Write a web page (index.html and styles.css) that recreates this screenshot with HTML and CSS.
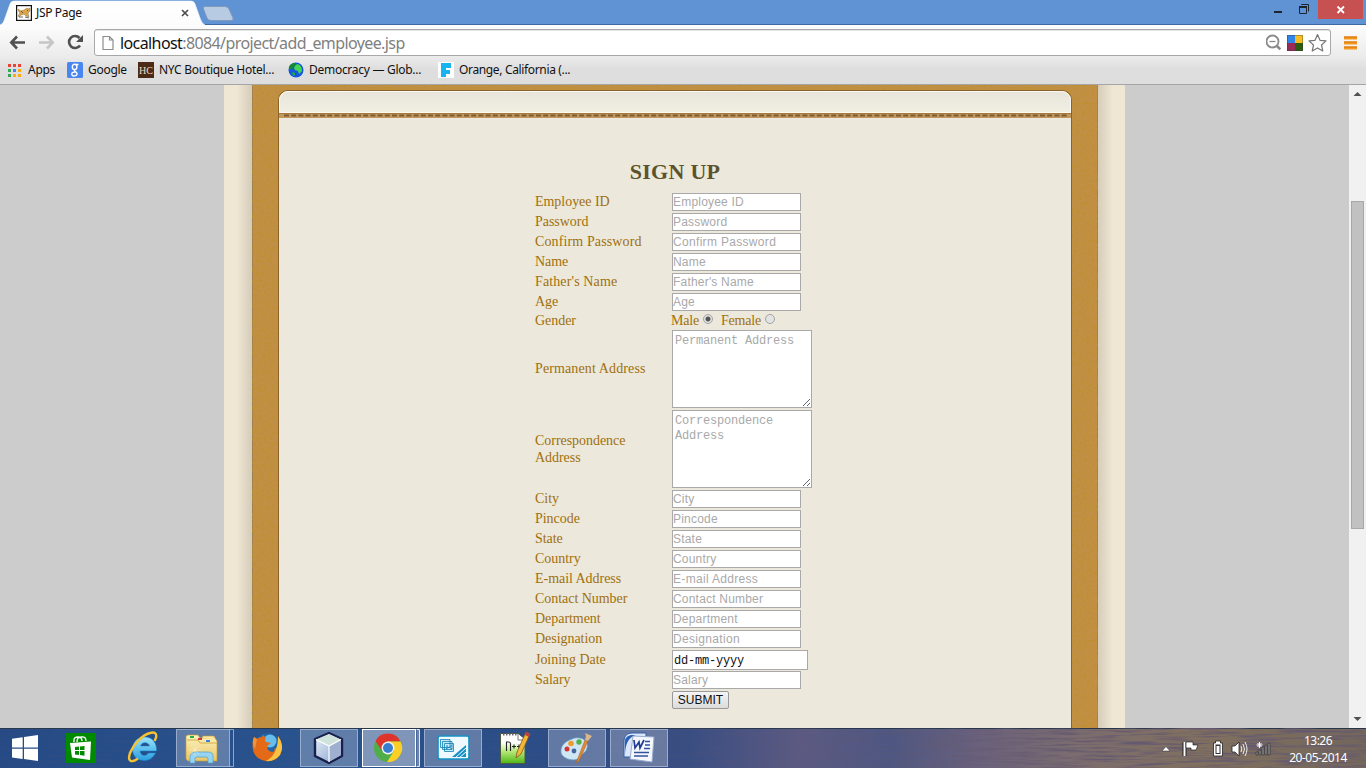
FILE: index.html
```html
<!DOCTYPE html>
<html lang="en">
<head>
<meta charset="utf-8">
<title>JSP Page</title>
<link rel="stylesheet" href="styles.css">
</head>
<body>
<header class="tabstrip">
  <svg class="tabs" width="240" height="25" viewBox="0 0 240 25">
    <defs><linearGradient id="tabg" x1="0" y1="0" x2="0" y2="1"><stop offset="0" stop-color="#fff"/><stop offset="1" stop-color="#fcfcfc"/></linearGradient></defs>
    <path d="M0 25C3 24 4 21 5 18L10 4Q11 1 14 1H191Q194 1 195 4L200 18Q202 24 205 25Z" fill="url(#tabg)" stroke="#f5f8fc" stroke-width=".6"/>
    <path d="M205 6.500H225Q228 6.500 229 9L233 18Q234 20.500 231 20.500H211Q208 20.500 207 18L203.500 9Q202.500 6.500 205 6.500Z" fill="#b7cbe3" stroke="#8099bd"/>
  </svg>
  <div class="tab">
    <svg width="16" height="16" viewBox="0 0 16 16"><rect x=".6" y=".6" width="14.800" height="14.800" fill="#fff" stroke="#111" stroke-width="1.200"/><path d="M2 4L5 6L8 5L11 3L12 4L14 3V6L12 8L13 12L10 11L8 9L5 10L3 12L2 11L4 8L3 7Z" fill="#dca547" stroke="#8c703e" stroke-width=".5"/><path d="M5 6L7 8M11 5L12 6M3 12H7M9 12L13 13" stroke="#444" stroke-width=".8"/></svg>
    <span class="tab-title">JSP Page</span>
    <svg class="tab-x" width="8" height="8" viewBox="0 0 8 8"><path d="M1 1L7 7M7 1L1 7" stroke="#4c4c4c" stroke-width="1.700"/></svg>
  </div>
  <div class="win">
    <svg width="110" height="19" viewBox="0 0 110 19">
      <path d="M0 12H8" stroke="#1c2530" stroke-width="2"/>
      <path d="M25.500 7.500H32.500V13.500H25.500ZM27.500 5V4.500H34.500V11.500" fill="none" stroke="#1c2530"/><path d="M25 7H33" stroke="#1c2530" stroke-width="2"/>
      <rect x="44" y="0" width="45" height="19" fill="#c75050"/><path d="M63.500 6.500L70 13M70 6.500L63.500 13" stroke="#fff" stroke-width="1.800"/>
    </svg>
  </div>
</header>
<div class="toolbar">
  <svg class="nav" width="94" height="34" viewBox="0 0 94 34">
    <g fill="none" stroke-width="2.600"><path d="M11 17.500H25M17 11.500L11.300 17.500L17 23.500" stroke="#505050"/><path d="M39 17.500H53M47 11.500L52.700 17.500L47 23.500" stroke="#c6c6c6"/><path d="M80 20.500A6 6 0 1 1 79.500 13" stroke="#505050"/></g><path d="M83 10V17H76Z" fill="#505050"/>
  </svg>
  <div class="omnibox">
    <svg width="12" height="16" viewBox="0 0 12 16"><path d="M1 1.500H7.500L11 5V14.500H1Z M7.500 1.500V5H11" fill="#fff" stroke="#8d8d8d" stroke-width="1.200"/></svg>
    <span class="url"><b>localhost</b>:8084/project/add_employee.jsp</span>
    <svg class="omni-icons" width="62" height="22" viewBox="0 0 62 22">
      <g fill="none" stroke="#8b8b8b"><circle cx="6.500" cy="9.500" r="6" stroke-width="1.800"/><path d="M3.500 9.500H9.500" stroke-width="1.300"/><path d="M11 14L14.300 17.300" stroke-width="2.600"/></g>
      <rect x="21" y="3" width="8" height="8" fill="#2f86e8"/><rect x="29" y="3" width="8" height="8" fill="#f8bd20"/><rect x="21" y="11" width="8" height="8" fill="#9a2b57"/><rect x="29" y="11" width="8" height="8" fill="#2d5e10"/><rect x="21.500" y="3.500" width="15" height="15" fill="none" stroke="#333" stroke-opacity=".35"/>
      <path d="M51.500 2.500L54 8.300L60 8.900L55.500 13L56.800 19L51.500 15.900L46.200 19L47.500 13L43 8.900L49 8.300Z" fill="#fff" stroke="#777" stroke-width="1.200" stroke-linejoin="round"/>
    </svg>
  </div>
  <svg class="menu" width="13" height="14" viewBox="0 0 13 14"><path d="M0 2H13M0 7H13M0 12H13" stroke="#f49a1c" stroke-width="3"/><path d="M0 1H13M0 6H13M0 11H13" stroke="#d96f0c" stroke-width="1"/></svg>
</div>
<nav class="bookmarks">
  <a class="bm bm-apps"><svg width="13" height="13" viewBox="0 0 13 13"><g fill="#ea4335"><rect width="3" height="3"/><rect x="5" width="3" height="3"/><rect x="10" width="3" height="3"/></g><rect y="5" width="3" height="3" fill="#34a853"/><rect x="5" y="5" width="3" height="3" fill="#4285f4"/><rect x="10" y="5" width="3" height="3" fill="#fbab10"/><rect y="10" width="3" height="3" fill="#34a853"/><rect x="5" y="10" width="3" height="3" fill="#fbab10"/><rect x="10" y="10" width="3" height="3" fill="#fbab10"/></svg><span>Apps</span></a>
  <a class="bm bm-google"><svg width="16" height="16" viewBox="0 0 16 16"><rect width="16" height="16" rx="1.500" fill="#4a86f0"/><g fill="none" stroke="#fff" stroke-width="1.400"><ellipse cx="7.600" cy="4.900" rx="2.300" ry="2.600"/><path d="M9 2.500H11.500M8 7.500C6 9 9.500 9.300 10 11.500C10.500 14.500 4.800 14.800 4.700 12C4.700 10.500 6.500 9.900 8.300 10"/></g></svg><span>Google</span></a>
  <a class="bm bm-nyc"><svg width="16" height="16" viewBox="0 0 16 16"><rect width="16" height="16" fill="#4b2a16"/><text x="1" y="12" class="hc">HC</text></svg><span>NYC Boutique Hotel...</span></a>
  <a class="bm bm-demo"><svg width="16" height="16" viewBox="0 0 16 16"><circle cx="8" cy="8" r="7.500" fill="#1557e0"/><path d="M2 3Q4 1 7 1L8 3L6 5L4 6L5 8L2 7L1 8Q0 5 2 3Z" fill="#168a32"/><path d="M7 4L9 2Q14 3 14 9L11 12L10 9L7 8L6 6Z" fill="#44d84a"/><path d="M4 10L7 11L7 13L5 14Z" fill="#1eb040"/></svg><span>Democracy — Glob...</span></a>
  <a class="bm bm-orange"><svg width="16" height="16" viewBox="0 0 16 16"><rect width="16" height="16" fill="#fff"/><path d="M3 1H13V6H8V8H12V12H8V15H3Z" fill="#16b5f0"/></svg><span>Orange, California (...</span></a>
</nav>
<main class="view">
  <div class="page">
    <div class="paper">
      <div class="wood">
        <svg class="grain" width="846" height="643"><filter id="leather" x="0" y="0" width="100%" height="100%"><feTurbulence type="fractalNoise" baseFrequency=".4" numOctaves="2" seed="4"/><feColorMatrix values="0 0 0 0 .5  0 0 0 0 .28  0 0 0 0 .03  2.600 0 0 0 -1.050"/></filter><rect width="846" height="643" filter="url(#leather)"/></svg>
        <div class="sheet">
          <div class="cap"></div>
          <div class="stitch"><svg width="792" height="4"><path d="M5 1.500H788" stroke="#7c5c30" stroke-width="2" stroke-dasharray="5 2.200"/></svg></div>
          <form class="signup">
            <h1>SIGN UP</h1>
            <div class="fields">
              <label>Employee ID</label><input placeholder="Employee ID">
              <label>Password</label><input placeholder="Password">
              <label class="wide">Confirm Password</label><input class="wide" placeholder="Confirm Password">
              <label>Name</label><input placeholder="Name">
              <label class="wide">Father's Name</label><input placeholder="Father's Name">
              <label>Age</label><input placeholder="Age">
              <label class="low">Gender</label><div class="gender"><span>Male</span><i class="radio on"></i><span class="female">Female</span><i class="radio"></i></div>
              <label class="wide">Permanent Address</label><textarea placeholder="Permanent Address"></textarea>
              <label class="two low">Correspondence Address</label><textarea placeholder="Correspondence Address"></textarea>
              <label>City</label><input placeholder="City">
              <label>Pincode</label><input placeholder="Pincode">
              <label>State</label><input placeholder="State">
              <label>Country</label><input placeholder="Country">
              <label>E-mail Address</label><input class="wide" placeholder="E-mail Address">
              <label>Contact Number</label><input placeholder="Contact Number">
              <label>Department</label><input placeholder="Department">
              <label>Designation</label><input class="wide" placeholder="Designation">
              <label class="low">Joining Date</label><input class="date" value="dd-mm-yyyy">
              <label>Salary</label><input placeholder="Salary">
              <span></span><button type="button">SUBMIT</button>
            </div>
          </form>
        </div>
      </div>
    </div>
  </div>
  <div class="scroll">
    <svg width="17" height="17"><path d="M4.500 11L8.500 7L12.500 11Z" fill="#505050"/></svg>
    <div class="thumb"></div>
    <svg width="17" height="17"><path d="M4.500 6L8.500 10L12.500 6Z" fill="#505050"/></svg>
  </div>
</main>
<footer class="taskbar">
  <svg class="bar" width="1366" height="40" viewBox="0 0 1366 40">
    <defs>
      <filter id="woodbar" x="0" y="0" width="100%" height="100%"><feTurbulence type="fractalNoise" baseFrequency=".025 .4" numOctaves="3" seed="8"/><feColorMatrix values="0 0 0 0 .13  0 0 0 0 .1  0 0 0 0 .16  3 0 0 0 -1.300"/></filter>
      <linearGradient id="fade"><stop offset=".45" stop-color="#fff" stop-opacity=".1"/><stop offset=".65" stop-color="#fff" stop-opacity=".2"/><stop offset=".8" stop-color="#fff"/></linearGradient>
      <mask id="fadem"><rect width="1366" height="40" fill="url(#fade)"/></mask>
      <linearGradient id="green" x1="0" y1="0" x2="0" y2="1"><stop offset=".3" stop-color="#fff"/><stop offset=".6" stop-color="#b5e878"/><stop offset="1" stop-color="#4eb614"/></linearGradient>
      <linearGradient id="folder" x1="0" y1="0" x2="0" y2="1"><stop offset="0" stop-color="#fdf3bd"/><stop offset="1" stop-color="#e8c667"/></linearGradient>
      <linearGradient id="ie" x1="0" y1="0" x2="0" y2="1"><stop offset="0" stop-color="#9be4fb"/><stop offset="1" stop-color="#2a9fe0"/></linearGradient>
      <linearGradient id="cube" x1="0" y1="0" x2="1" y2="1"><stop offset="0" stop-color="#eef4fb"/><stop offset="1" stop-color="#7f9ccc"/></linearGradient>
    </defs>
    <g mask="url(#fadem)"><rect width="1366" height="40" filter="url(#woodbar)"/></g>
    <g fill="#fff" fill-opacity=".25" stroke="#c5d3e8" stroke-opacity=".65">
      <rect x="176.500" y="1.500" width="53" height="37"/><path d="M229.500 1.500H233.500V38.500H229.500" fill="none"/>
      <rect x="300.500" y="1.500" width="57" height="37"/><rect x="424.500" y="1.500" width="57" height="37"/><rect x="548.500" y="1.500" width="57" height="37"/><rect x="610.500" y="1.500" width="57" height="37"/>
    </g>
    <rect x="362.500" y="1.500" width="53" height="37" fill="#fff" fill-opacity=".4" stroke="#fff"/><path d="M416.500 1.500H419.500V38.500H416.500" fill="#6d84ad" stroke="#e5ebf5"/>
    <!-- start -->
    <path d="M12 10.800L22.700 9.300V19.500H12ZM24 9.100L38 7V19.500H24ZM12 20.700H22.700V31L12 29.500ZM24 20.700H38V33L24 31.100Z" fill="#fff"/>
    <!-- store -->
    <rect x="66" y="5" width="30" height="30" fill="#008a00"/><path d="M70 15L91 13.500L90 32L72 29.500Z" fill="#fff"/><path d="M74 14V12Q74 9 78 9Q82 9 82 13M77 14Q77 9 81 9Q86 8 86 13" fill="none" stroke="#fff" stroke-width="1.300"/><path d="M75 19L79 18.500V22H75ZM80 18.500L84.500 18V22H80ZM75 23H79V27L75 26.500ZM80 23H84.500V27.700L80 27Z" fill="#008a00"/>
    <!-- internet explorer -->
    <path d="M155.500 25C153 30 149 32.500 144.500 32.500C137 32.500 132.500 28 132.500 21C132.500 14 137.500 9 144.500 9C152.500 9 157 15 156.500 23H140C140.500 28 146 29 148.500 25ZM140.500 18H149.500C148.500 13.500 141.500 13.500 140.500 18Z" fill="url(#ie)" stroke="#1787ce" stroke-width=".5" fill-rule="evenodd"/><path d="M154.500 13C158 7 156 3 150 5C142 7 133 17 130 25C127 34 132 35 138 30.500" fill="none" stroke="#f6c330" stroke-width="2.400"/>
    <!-- explorer -->
    <path d="M186 8L188 7H198L200 10H215L217 13V33H188L186 31Z" fill="url(#folder)" stroke="#c29b3a" stroke-width=".7"/><path d="M187 12H198L200 15H217" fill="none" stroke="#d1ac4d"/><path d="M202 10L203 8H214L216 12" fill="#f9e59c" stroke="#c29b3a" stroke-width=".6"/><rect x="190" y="8" width="4" height="2" fill="#24b14c"/><rect x="198" y="10" width="4" height="2" fill="#d53a2e"/><rect x="206" y="12" width="4" height="2" fill="#3884d6"/><path d="M190 35V28Q191 24 195 24H208Q213 24 213 28V35H208V31Q208 29 206 29H197Q195 29 195 31V35Z" fill="#98d4ef" stroke="#4e9dcb" stroke-width=".7"/><path d="M189 22H201M195 16V28M191 18L199 26M199 18L191 26" stroke="#fff" stroke-width=".5" stroke-opacity=".7"/>
    <!-- firefox -->
    <circle cx="267.500" cy="19" r="13.500" fill="#1d68ad"/><circle cx="270" cy="13" r="6.500" fill="#67bdec"/><path d="M254 9L257 11Q259 9 262 9L263 7L266 10Q264 12 266 14L271 15L267 18Q267 23 272 24Q276 23 274 21Q280 20 278 8Q285 18 280 27Q273 36 262 32Q249 27 254 9Z" fill="#e56a18"/><path d="M278 8Q285 18 280 27Q274 34 266 33Q278 27 278 8Z" fill="#f8c343"/><path d="M254 9L257 11L255 21Q251 16 254 9" fill="#f09437"/>
    <!-- netbeans -->
    <path d="M329 5L342 11V28L329 35L315 28V11Z" fill="url(#cube)" stroke="#18204b" stroke-width="2.400" stroke-linejoin="round"/><path d="M316 11.500L329 6L341 11.500L329 18Z" fill="#cfe3dc"/><path d="M329 18V34L341 27V12Z" fill="#9eafd0"/><path d="M316 11.500L329 18L341 11.500M329 18V34" stroke="#fff" stroke-width="1.200" fill="none"/>
    <!-- chrome -->
    <circle cx="388" cy="20" r="14" fill="#4fae4a"/><path d="M375.500 13A14 14 0 0 1 400.500 13.500H388L382 23Z" fill="#de342c"/><path d="M388 13.500H400.500A14 14 0 0 1 387 34L394 23Z" fill="#fbcf24"/><circle cx="388" cy="20" r="6.500" fill="#f4f4f4"/><circle cx="388" cy="20" r="5" fill="#367fd0"/>
    <!-- whiteboard -->
    <rect x="438" y="8" width="31" height="23" rx="2" fill="#eefaff" stroke="#1392c6" stroke-width="1.600"/><path d="M440.500 11.500H450V19.500H440.500ZM442.500 13.500H452V21.500H442.500ZM444.500 15.500H453.500V23.500H444.500Z" fill="#c6ebfa" stroke="#1380b2" stroke-width=".8"/><path d="M446 18H448M450 18H452M446 21L449 19L452 21" stroke="#1380b2" fill="none"/><path d="M452 29L466 17V29Z" fill="#1590c8"/><path d="M455 30L466 20M459 30L466 24" stroke="#fff" stroke-width="1"/>
    <!-- notepad++ -->
    <path d="M500.500 5.500H518L525 11V35.500H500.500Z" fill="url(#green)" stroke="#4b5941"/><path d="M503 6.500H518" stroke="#667" stroke-dasharray="1.500 1.500" stroke-width="2"/><path d="M518 6V12H525" fill="#fff" stroke="#777"/><path d="M506.500 23V14H509Q510.500 14 510.500 16V23M512 18.500H516M514 16.500V20.500M517 18.500H521M519 16.500V20.500" fill="none" stroke="#222" stroke-width="1.100"/><path d="M526 4L530 6L521 26L516 30L517 24Z" fill="#f5b536" stroke="#7e581d" stroke-width=".8"/><path d="M526 4L530 6L529 9L525 7Z" fill="#c43b42"/>
    <!-- paint -->
    <path d="M572 11C580 7 590 13 587 20C586 25 582 25 581 28C578 35 563 32 561 25C560 17 566 13 572 11Z" fill="#cfe6f5" stroke="#6099bb" stroke-width=".8"/><circle cx="571" cy="15.500" r="2.800" fill="#f09c2d"/><circle cx="579" cy="14" r="2.700" fill="#52b248"/><circle cx="567" cy="21" r="2.500" fill="#d63331"/><circle cx="574" cy="23" r="2.400" fill="#44679d"/><path d="M588 13L579 33L576 35L585 12Z" fill="#e08836" stroke="#a55b20" stroke-width=".5"/><path d="M585 12L586 8L585 5L592 8L588 13Z" fill="#d9b88b"/>
    <!-- word -->
    <path d="M624 12Q625 5 632 5H646V29H624Z" fill="#dce8fa" stroke="#315fa5"/><path d="M625 28Q625 10 636 7H631Q626 8 625 12Z" fill="#2b62b5"/><path d="M633 8L654 9L652 34L630 31Z" fill="#f4f7fd" stroke="#98acd1"/><path d="M634 12L635 20L639 14L640 20L644 12" fill="none" stroke="#223b92" stroke-width="1.700"/><path d="M645 13.500H650M645 17H650M644 20.500H650M634 24.500H649M634 28H648" stroke="#31539e" stroke-width="1.700"/>
    <!-- tray -->
    <path d="M1162 23L1166 18.500L1170 23Z" fill="#fff" stroke="#333" stroke-width=".5"/>
    <path d="M1184.500 14V28" stroke="#222" stroke-width="4"/><path d="M1184.500 14V28" stroke="#fff" stroke-width="2"/><path d="M1186 14H1193V17H1198L1196 22H1191V20H1186Z" fill="#fff" stroke="#222" stroke-width=".7"/>
    <path d="M1215.500 13H1220.500V15H1222.500V28H1213.500V15H1215.500Z" fill="#fff" stroke="#222" stroke-width=".8"/><rect x="1215.500" y="16.500" width="5" height="9.500" fill="#333"/><rect x="1216.500" y="18" width="3" height="7" fill="#fff"/>
    <path d="M1232 18H1235L1239 14V28L1235 24H1232Z" fill="#fff" stroke="#222" stroke-width=".8"/><path d="M1241 18Q1242.500 21 1241 24M1243 16Q1246 21 1243 26M1245 14Q1249 21 1245 28" fill="none" stroke="#eee" stroke-width="1"/>
    <path d="M1256 24H1258V27H1256ZM1259 22H1261V27H1259ZM1262 19H1264V27H1262ZM1265 17H1267V27H1265ZM1268 15H1270V27H1268Z" fill="#929292" stroke="#333" stroke-width=".7"/><path d="M1259.500 14V20M1256.500 17H1262.500M1257.500 15L1261.500 19M1261.500 15L1257.500 19" stroke="#fff" stroke-width="1"/>
  </svg>
  <div class="clock"><span>13:26</span><span>20-05-2014</span></div>
</footer>
</body>
</html>
```
FILE: styles.css
```css
* { box-sizing: border-box; }
body { margin: 0; width: 1366px; height: 768px; overflow: hidden; display: flex; flex-direction: column; font-family: "Noto Sans", "Open Sans", sans-serif; font-size: 12px; color: #111; }
svg { display: block; flex: none; }
.tabstrip { position: relative; height: 25px; background: #5f93d3; border-bottom: 1px solid #3f67a2; display: flex; justify-content: space-between; flex: none; }
.tabs { position: absolute; left: 0; top: 0; }
.tab { position: relative; display: flex; align-items: flex-start; width: 200px; padding: 5px 0 0 16px; }
.tab-title { margin-left: 4px; line-height: 16px; letter-spacing: -.35px; }
.tab-x { margin: 4px 11px 0 auto; }
.win { position: relative; width: 93px; overflow: hidden; }
.win svg { margin-left: 1px; }
.toolbar { height: 32px; flex: none; display: flex; align-items: flex-start; background: linear-gradient(#fdfdfd, #ebebeb); }
.omnibox { width: 1237px; height: 27px; margin-top: 4px; border: 1px solid #a8a8a8; border-radius: 3px; background: #fff; display: flex; align-items: center; padding-left: 7px; box-shadow: inset 0 1px #e5e5e5; }
.url { margin-left: 6px; font-size: 16px; color: #808080; letter-spacing: -.6px; line-height: 22px; }
.url b { font-weight: 400; color: #111; }
.omni-icons { margin: 0 2px 0 auto; }
.menu { margin: 11px 0 0 13px; }
.bookmarks { height: 28px; flex: none; display: flex; align-items: center; padding: 0 0 1px 8px; background: linear-gradient(#ebebeb, #dedede 45%, #dedede); border-bottom: 1px solid #a5a5a5; }
.bm { display: flex; align-items: center; line-height: 18px; white-space: nowrap; letter-spacing: -.28px; }
.bm span { flex: none; }
.bm-apps { width: 59px; gap: 7px; }
.bm-google { width: 71px; gap: 5px; }
.bm-nyc { width: 150px; gap: 5px; }
.bm-demo { width: 150px; gap: 5px; }
.bm-orange { gap: 5px; letter-spacing: -.35px; }
.hc { font: 10px "Liberation Serif", serif; fill: #eadccb; letter-spacing: 0; }
.view { height: 643px; flex: none; display: flex; }
.page { width: 1349px; background: #ccc; padding-left: 224px; }
.paper { width: 901px; height: 643px; padding: 0 27px 0 28px; background: linear-gradient(90deg, #efe7d4 13px, #d4cbb9 28px, #d4cbb9 873px, #efe7d4 889px); }
.wood { position: relative; height: 643px; padding: 6px 26px 0; background: #c28f47; border-left: 1px solid #a08053; border-right: 1px solid #a08053; }
.grain { position: absolute; left: -1px; top: 0; }
.sheet { position: relative; height: 637px; background: #ece8dc; border-radius: 9px 9px 0 0; box-shadow: 0 0 0 1px #8b6229; }
.cap { height: 22px; border: 1px solid #fbf9f2; border-radius: 9px 9px 0 0; background: linear-gradient(#e8e5dc, #f1eee2); }
.stitch { height: 5px; background: #c3985e; border-top: 1px solid #a6783d; }
.signup { font-family: "Liberation Serif", serif; color: #a0700d; }
.signup h1 { margin: 0; padding-top: 40px; height: 74px; color: #5c532e; font-size: 22px; line-height: 28px; text-align: center; letter-spacing: .3px; }
.fields { display: grid; grid-template-columns: 136px 150px; margin-left: 256px; font-size: 14px; line-height: 17px; grid-template-rows: repeat(6, 20px) 17px 80px 80px repeat(8, 20px) 21px 20px 20px; align-items: center; }
.fields label { letter-spacing: -.04px; padding-bottom: 2px; }
.fields label.wide { letter-spacing: .12px; }
.fields label.low { padding-bottom: 0; }
.two { width: 110px; }
.fields input { width: 129px; height: 18px; margin: 1px; padding: 0; border: 1px solid #a9a9a9; border-radius: 0; background: #fff; font: 12px "Liberation Sans", sans-serif; letter-spacing: .2px; color: #111; outline: 0; }
.fields input.wide { letter-spacing: .32px; }
.fields ::placeholder { color: #a9a9a9; opacity: 1; }
.fields textarea { width: 140px; height: 78px; margin: 1px; padding: 3px 2px 2px; border: 1px solid #a9a9a9; background: #fff; font: 12px/15px "Liberation Mono", monospace; letter-spacing: -.2px; overflow: hidden; }
.fields .date { width: 136px; height: 20px; padding: 3px 1px 0; font-family: "Liberation Mono", monospace; letter-spacing: -.2px; }
.gender { display: flex; align-items: center; height: 17px; padding-bottom: 1px; letter-spacing: -.2px; }
.radio { width: 10px; height: 10px; border: 1px solid #a3a3a3; border-radius: 50%; background: #e3e3e3; margin: 0 0 2px 4px; }
.on { background: radial-gradient(circle, #555 2px, #e3e3e3 3px); }
.female { margin-left: 8px; }
.fields button { width: 57px; height: 18px; margin: 1px; padding: 0; border: 1px solid #999; border-radius: 2px; background: linear-gradient(#f5f5f5, #dcdcdc); font: 12px "Liberation Sans", sans-serif; color: #111; }
.scroll { width: 17px; background: #f1f1f1; display: flex; flex-direction: column; }
.thumb { height: 328px; width: 13px; margin: 99px 2px auto; background: #c1c1c1; border: 1px solid #a8a8a8; }
.taskbar { position: relative; height: 40px; flex: none; display: flex; justify-content: flex-end; border-top: 1px solid #26374c; background: linear-gradient(90deg, #264a85, #28538f 300px, #2c4c86 560px, #3a4e82 690px, #5c5a82 800px, #4e5782 890px, #6a617c 980px, #7c6d6e 1080px, #80705f 1200px, #74675b); }
.bar { position: absolute; left: 0; top: -1px; }
.clock { position: relative; width: 70px; margin-right: 13px; padding-top: 3px; display: flex; flex-direction: column; align-items: center; color: #fff; line-height: 17px; letter-spacing: -.5px; white-space: nowrap; }
```
